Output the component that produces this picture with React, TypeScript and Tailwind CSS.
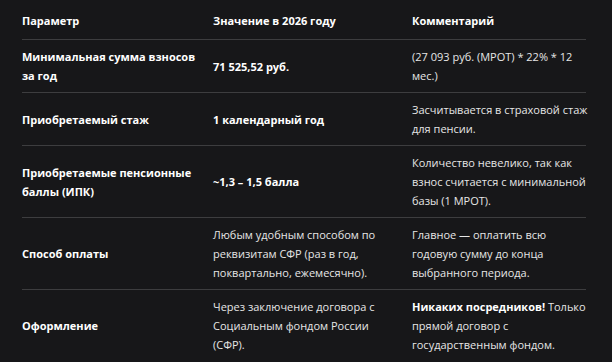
import React from 'react';

type Row = {
  param: string[];
  value: string[];
  valueBold?: boolean;
  comment: React.ReactNode[];
};

const rows: Row[] = [
  {
    param: ['Минимальная сумма взносов', 'за год'],
    value: ['71 525,52 руб.'],
    valueBold: true,
    comment: ['(27 093 руб. (МРОТ) * 22% * 12', 'мес.)'],
  },
  {
    param: ['Приобретаемый стаж'],
    value: ['1 календарный год'],
    valueBold: true,
    comment: ['Засчитывается в страховой стаж', 'для пенсии.'],
  },
  {
    param: ['Приобретаемые пенсионные', 'баллы (ИПК)'],
    value: ['~1,3 – 1,5 балла'],
    valueBold: true,
    comment: ['Количество невелико, так как', 'взнос считается с минимальной', 'базы (1 МРОТ).'],
  },
  {
    param: ['Способ оплаты'],
    value: ['Любым удобным способом по', 'реквизитам СФР (раз в год,', 'поквартально, ежемесячно).'],
    comment: ['Главное — оплатить всю', 'годовую сумму до конца', 'выбранного периода.'],
  },
  {
    param: ['Оформление'],
    value: ['Через заключение договора с', 'Социальным фондом России', '(СФР).'],
    comment: [
      <>
        <b className="font-bold text-white">Никаких посредников!</b> Только
      </>,
      'прямой договор с',
      'государственным фондом.',
    ],
  },
];

function Lines({ lines }: { lines: React.ReactNode[] }) {
  return (
    <>
      {lines.map((l, i) => (
        <div key={i} className="whitespace-nowrap">{l}</div>
      ))}
    </>
  );
}

export default function App() {
  return (
    <div className="w-[612px] h-[362px] overflow-hidden bg-[#171719] pt-[3px] pl-[22px] font-['Open_Sans','Noto_Sans',sans-serif] text-[11px] leading-[19px] text-[#e6e6e6]">
      <table className="w-[564px] table-fixed border-collapse text-left">
        <colgroup>
          <col className="w-[191px]" />
          <col className="w-[199px]" />
          <col className="w-[174px]" />
        </colgroup>
        <thead>
          <tr className="border-b border-[#3d3d3f]">
            <th className="pt-[8px] pb-[9px] pr-2 font-bold text-white">Параметр</th>
            <th className="pt-[8px] pb-[9px] pr-2 font-bold text-white">Значение в 2026 году</th>
            <th className="pt-[8px] pb-[9px] font-bold text-white">Комментарий</th>
          </tr>
        </thead>
        <tbody>
          {rows.map((r, i) => (
            <tr key={i} className={i < rows.length - 1 ? 'border-b border-[#3d3d3f]' : ''}>
              <td className="py-[7px] pr-2 align-middle font-bold text-white">
                <Lines lines={r.param} />
              </td>
              <td className={`py-[7px] pr-2 align-middle ${r.valueBold ? 'font-bold text-white' : ''}`}>
                <Lines lines={r.value} />
              </td>
              <td className="py-[7px] align-middle">
                <Lines lines={r.comment} />
              </td>
            </tr>
          ))}
        </tbody>
      </table>
    </div>
  );
}
